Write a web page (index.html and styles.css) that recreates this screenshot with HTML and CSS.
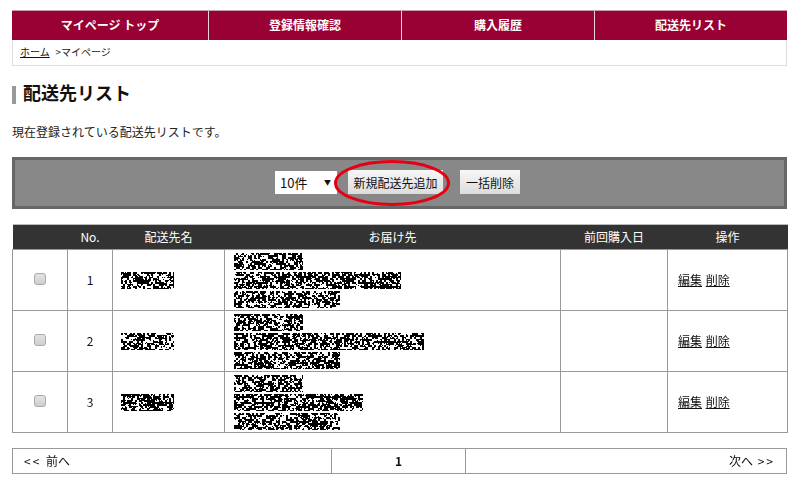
FILE: index.html
```html
<!DOCTYPE html>
<html lang="ja">
<head>
<meta charset="utf-8">
<title>配送先リスト</title>
<link rel="stylesheet" href="styles.css">
</head>
<body>
<div class="page">
  <nav class="gnav">
    <a class="gnav-item">マイページ トップ</a>
    <a class="gnav-item">登録情報確認</a>
    <a class="gnav-item">購入履歴</a>
    <a class="gnav-item">配送先リスト</a>
  </nav>
  <div class="crumbs"><a class="link">ホーム</a> &gt;マイページ</div>
  <h1 class="title">配送先リスト</h1>
  <p class="lead">現在登録されている配送先リストです。</p>
  <div class="toolbar">
    <div class="select-wrap">
      <select class="select"><option>10件</option></select>
    </div>
    <button class="btn btn-add">新規配送先追加</button>
    <button class="btn">一括削除</button>
    <svg class="ring" width="118" height="48" viewBox="0 0 118 48"><ellipse cx="59" cy="24" rx="56.5" ry="21.5" fill="none" stroke="#e60012" stroke-width="3"/></svg>
  </div>
  <table class="list">
    <colgroup>
      <col class="c1"><col class="c2"><col class="c3"><col class="c4"><col class="c5"><col class="c6">
    </colgroup>
    <thead>
      <tr><th></th><th>No.</th><th>配送先名</th><th>お届け先</th><th>前回購入日</th><th>操作</th></tr>
    </thead>
    <tbody>
      <tr>
        <td class="center"><input class="check" type="checkbox"></td>
        <td class="center">1</td>
        <td class="mask-cell"><canvas class="noise" width="53" height="17"></canvas></td>
        <td class="mask-cell addr"><div class="lines"><canvas class="noise" width="69" height="17"></canvas><canvas class="noise" width="167" height="17"></canvas><canvas class="noise" width="106" height="17"></canvas></div></td>
        <td></td>
        <td class="ops"><a class="link">編集</a> <a class="link">削除</a></td>
      </tr>
      <tr>
        <td class="center"><input class="check" type="checkbox"></td>
        <td class="center">2</td>
        <td class="mask-cell"><canvas class="noise" width="53" height="17"></canvas></td>
        <td class="mask-cell addr"><div class="lines"><canvas class="noise" width="69" height="17"></canvas><canvas class="noise" width="190" height="17"></canvas><canvas class="noise" width="106" height="17"></canvas></div></td>
        <td></td>
        <td class="ops"><a class="link">編集</a> <a class="link">削除</a></td>
      </tr>
      <tr>
        <td class="center"><input class="check" type="checkbox"></td>
        <td class="center">3</td>
        <td class="mask-cell"><canvas class="noise" width="53" height="17"></canvas></td>
        <td class="mask-cell addr"><div class="lines"><canvas class="noise" width="69" height="17"></canvas><canvas class="noise" width="129" height="17"></canvas><canvas class="noise" width="106" height="17"></canvas></div></td>
        <td></td>
        <td class="ops"><a class="link">編集</a> <a class="link">削除</a></td>
      </tr>
    </tbody>
  </table>
  <div class="pager">
    <div class="pager-prev"><span class="arrows">&lt;&lt;</span> 前へ</div>
    <div class="pager-num">1</div>
    <div class="pager-next">次へ <span class="arrows">&gt;&gt;</span></div>
  </div>
</div>
<script src="noise.js"></script>
</body>
</html>
```
FILE: styles.css
```css
* { box-sizing: border-box; }
html, body { margin: 0; padding: 0; background: #fff; }
body {
  font-family: "Noto Sans CJK JP", "Liberation Sans", sans-serif;
  font-size: 12px;
  color: #222;
  overflow: hidden;
}
.page { width: 775px; margin: 10px 0 0 12px; }
.link { color: #111; text-decoration: underline; }

.gnav {
  display: grid;
  grid-template-columns: 196px 193px 193px 193px;
  height: 30px;
  background: #990033;
  border-top: 1px solid #c9a0ad;
}
.gnav-item {
  display: flex;
  align-items: center;
  justify-content: center;
  color: #fff;
  font-weight: 700;
  font-size: 12px;
  line-height: 1;
  border-left: 1px solid #e8d3da;
  padding-bottom: 1px;
}
.gnav-item:first-child { border-left: 0; }

.crumbs {
  height: 26px;
  padding: 0 8px 2px 7px;
  display: flex;
  align-items: center;
  gap: 0.35em;
  font-size: 10px;
  border: 1px solid #ddd;
  border-top: 0;
  white-space: pre;
}

.title {
  margin: 20px 0 0;
  height: 18px;
  border-left: 4px solid #999;
  padding-left: 7px;
  font-size: 18px;
  line-height: 12px;
  font-weight: 700;
  color: #111;
}

.lead { margin: 19px 0 0; font-size: 12px; line-height: 18px; }

.toolbar {
  position: relative;
  margin-top: 16px;
  height: 52px;
  background: #888;
  border: 3px solid #666;
  display: flex;
  align-items: center;
  justify-content: center;
  padding: 0 4px 2px 0;
}
.select-wrap { position: relative; width: 62px; height: 23px; }
.select-wrap::after {
  content: "▼";
  position: absolute;
  right: 6px;
  top: 5px;
  font-size: 7px;
  line-height: 12px;
  color: #111;
  pointer-events: none;
}
.select {
  appearance: none;
  width: 100%;
  height: 100%;
  border: 0;
  border-radius: 0;
  background: #fff;
  padding: 0 0 0 5px;
  font: 13px "Noto Sans CJK JP", sans-serif;
  color: #111;
}
.btn {
  height: 24px;
  margin-left: 17px;
  width: 60px;
  padding: 0;
  border: 0;
  background: linear-gradient(#f7f7f7, #dcdcdc);
  font: 12px "Noto Sans CJK JP", sans-serif;
  color: #111;
}
.btn-add { width: 95px; margin-left: 11px; }
.ring { position: absolute; left: 318px; top: -1px; }

.list {
  margin-top: 15px;
  width: 775px;
  table-layout: fixed;
  border-collapse: collapse;
  font-size: 12px;
}
.c1 { width: 55px; }
.c2 { width: 45px; }
.c3 { width: 112px; }
.c4 { width: 336px; }
.c5 { width: 107px; }
.c6 { width: 120px; }
.list th {
  height: 25px;
  padding: 0;
  background: #333;
  color: #fff;
  font-weight: 400;
  font-size: 12px;
  border-top: 1px solid #bbb;
  line-height: 1;
}
.list td {
  height: 61px;
  padding: 0 0 2px;
  border: 1px solid #999;
  vertical-align: middle;
  color: #111;
}
.center { text-align: center; }
.mask-cell { padding: 0 0 0 8px !important; }
.addr { padding-left: 9px !important; }
.lines { display: flex; flex-direction: column; align-items: flex-start; gap: 2px; }
.noise { display: block; }
.ops { padding-left: 10px !important; word-spacing: 1px; }
.check {
  appearance: none;
  display: block;
  width: 12px;
  height: 12px;
  margin: 0 auto;
  border: 1px solid #aaa;
  border-radius: 3px;
  background: linear-gradient(#e4e4e4, #cfcfcf);
}

.pager {
  margin-top: 15px;
  height: 26px;
  display: grid;
  grid-template-columns: 318px 135px 1fr;
  border: 1px solid #999;
  font-size: 12px;
  line-height: 24px;
  color: #111;
}
.arrows { letter-spacing: 2px; margin: 0 2px; }
.pager-prev { padding-left: 9px; }
.pager-num { text-align: center; font-weight: 700; border-left: 1px solid #999; border-right: 1px solid #999; }
.pager-next { text-align: right; padding-right: 9px; }
```
FILE: noise.js
```js
var seed = 12345;
function rnd() {
  seed = (seed * 1103515245 + 12345) & 0x7fffffff;
  return (seed >> 12) / 524288;
}
document.querySelectorAll('.noise').forEach(function (c) {
  var g = c.getContext('2d');
  g.fillStyle = '#fff';
  g.fillRect(0, 0, c.width, c.height);
  g.fillStyle = '#000';
  for (var y = 0; y < c.height; y += 2) {
    for (var x = 0; x < c.width; x += 2) {
      if (rnd() > 0.38) g.fillRect(x, y, 2, 2);
      if (rnd() > 0.5) {
        g.fillStyle = rnd() > 0.5 ? '#fff' : '#000';
        g.fillRect(x + (rnd() > 0.5 ? 1 : 0), y + (rnd() > 0.5 ? 1 : 0), 1, 1);
        g.fillStyle = '#000';
      }
    }
  }
});
```
